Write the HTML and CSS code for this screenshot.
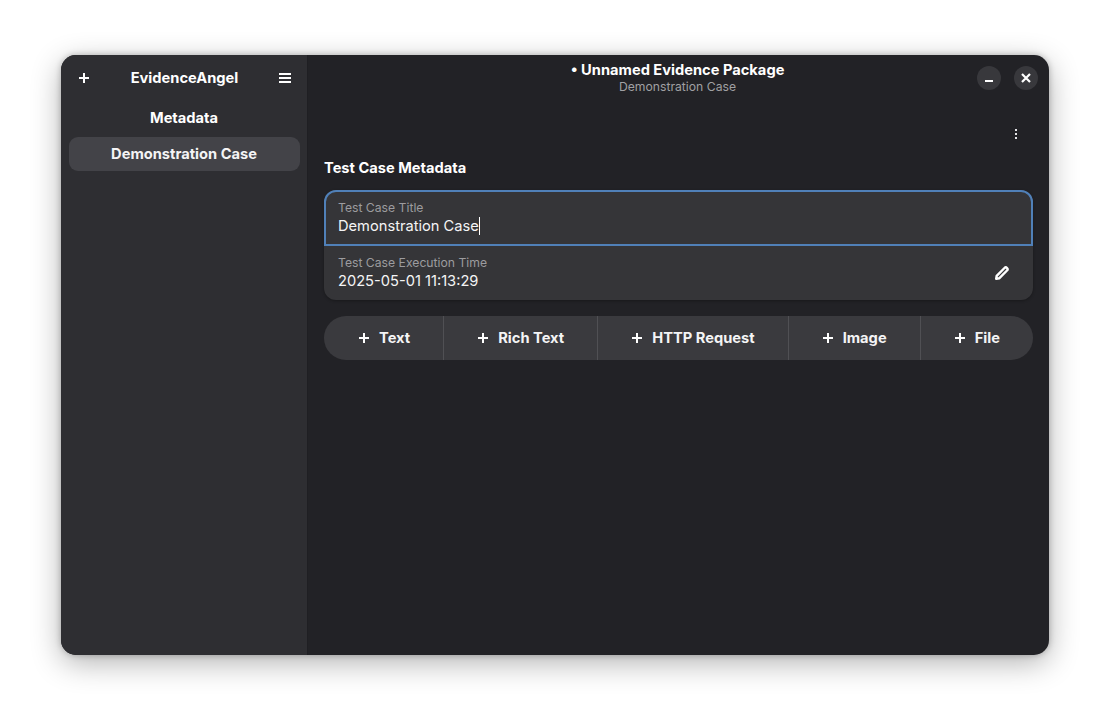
FILE: index.html
```html
<!DOCTYPE html>
<html lang="en">
<head>
    <meta charset="UTF-8">
    <meta name="viewport" content="width=device-width, initial-scale=1.0">
    <title>EvidenceAngel</title>
    <link rel="stylesheet" href="styles.css">
</head>
<body>
<div class="window">
    <div class="sidebar">
        <div class="side-header">
            <svg class="icon" width="12" height="12" viewBox="0 0 12 12"><path d="M6 1v10M1 6h10" stroke="#fff" stroke-width="2"/></svg>
            <span class="app-title">EvidenceAngel</span>
            <svg class="icon" width="12" height="12" viewBox="0 0 12 12"><path d="M0 2h12M0 6h12M0 10h12" stroke="#fff" stroke-width="2"/></svg>
        </div>
        <div class="side-section">Metadata</div>
        <div class="side-item">Demonstration Case</div>
    </div>
    <div class="main">
        <div class="topbar">
            <div class="titles">
                <div class="title">• Unnamed Evidence Package</div>
                <div class="subtitle">Demonstration Case</div>
            </div>
            <div class="win-buttons">
                <div class="win-button">
                    <svg width="10" height="10" viewBox="0 0 10 10"><path d="M1 8h8" stroke="#fff" stroke-width="2"/></svg>
                </div>
                <div class="win-button">
                    <svg width="10" height="10" viewBox="0 0 10 10"><path d="M1 1l8 8M9 1l-8 8" stroke="#fff" stroke-width="2.2"/></svg>
                </div>
            </div>
        </div>
        <div class="content">
            <div class="menu-row">
                <svg width="4" height="12" viewBox="0 0 4 12"><path d="M1 1h2v2H1zM1 5h2v2H1zM1 9h2v2H1z" fill="#e4e4e6"/></svg>
            </div>
            <h2 class="group-title">Test Case Metadata</h2>
            <div class="card">
                <div class="row row-focus">
                    <div class="row-label">Test Case Title</div>
                    <div class="row-value">Demonstration Case<span class="caret"></span></div>
                </div>
                <div class="row row-split">
                    <div>
                        <div class="row-label">Test Case Execution Time</div>
                        <div class="row-value">2025-05-01 11:13:29</div>
                    </div>
                    <svg class="pencil" width="16" height="16" viewBox="0 0 16 16"><path d="M2.2 13.8l.5-3 7.8-7.8a1.7 1.7 0 0 1 2.5 2.5l-7.8 7.8z" fill="none" stroke="#fff" stroke-width="2.4" stroke-linejoin="round"/></svg>
                </div>
            </div>
            <div class="linked">
                <div class="add-btn"><svg width="12" height="12" viewBox="0 0 12 12"><path d="M6 1v10M1 6h10" stroke="#fff" stroke-width="2"/></svg>Text</div>
                <div class="add-btn"><svg width="12" height="12" viewBox="0 0 12 12"><path d="M6 1v10M1 6h10" stroke="#fff" stroke-width="2"/></svg>Rich Text</div>
                <div class="add-btn"><svg width="12" height="12" viewBox="0 0 12 12"><path d="M6 1v10M1 6h10" stroke="#fff" stroke-width="2"/></svg>HTTP Request</div>
                <div class="add-btn"><svg width="12" height="12" viewBox="0 0 12 12"><path d="M6 1v10M1 6h10" stroke="#fff" stroke-width="2"/></svg>Image</div>
                <div class="add-btn"><svg width="12" height="12" viewBox="0 0 12 12"><path d="M6 1v10M1 6h10" stroke="#fff" stroke-width="2"/></svg>File</div>
            </div>
        </div>
    </div>
</div>
</body>
</html>
```

FILE: styles.css
```css
html, body {
    margin: 0;
    height: 100%;
}
body {
    background: #fff;
    font-family: "Inter", "Liberation Sans", sans-serif;
    font-size: 14.67px;
    color: #fff;
    padding: 55px 61px 67px 61px;
    box-sizing: border-box;
}

.window {
    display: flex;
    height: 600px;
    width: 988px;
    border-radius: 15px;
    overflow: hidden;
    box-shadow: 0 8px 30px rgba(0, 0, 0, 0.3), 0 0 6px rgba(0, 0, 0, 0.25);
    background: #222226;
}

/* sidebar */
.sidebar {
    width: 247px;
    flex-shrink: 0;
    background: #2e2e32;
    box-sizing: border-box;
    padding: 0 7px 0 8px;
    border-right: 1px solid #1f1f23;
}
.side-header {
    height: 45px;
    display: flex;
    align-items: center;
    justify-content: space-between;
    padding: 0 9px;
}
.app-title {
    font-weight: 700;
}
.side-section {
    height: 37px;
    line-height: 36px;
    padding-right: 1px;
    text-align: center;
    font-weight: 700;
}
.side-item {
    height: 34px;
    line-height: 34px;
    padding-right: 1px;
    text-align: center;
    font-weight: 700;
    background: #434348;
    border-radius: 9px;
    color: #f4f4f5;
}

/* main area */
.main {
    flex: 1;
    display: flex;
    flex-direction: column;
}
.topbar {
    position: relative;
    height: 47px;
}
.titles {
    text-align: center;
    padding: 6px 2px 0 0;
}
.title {
    font-weight: 700;
    line-height: 18px;
}
.subtitle {
    font-size: 12.2px;
    line-height: 15px;
    color: #a0a0a3;
}
.win-buttons {
    position: absolute;
    top: 11px;
    right: 11px;
    display: flex;
    gap: 13px;
}
.win-button {
    width: 24px;
    height: 24px;
    border-radius: 50%;
    background: #38383c;
    display: flex;
    align-items: center;
    justify-content: center;
}

.content {
    padding: 0 16px;
}
.menu-row {
    height: 64px;
    display: flex;
    justify-content: flex-end;
    align-items: flex-start;
    padding: 26px 15px 0 0;
    box-sizing: border-box;
}
.group-title {
    margin: -8px 0 12px 0;
    font-size: 14.67px;
    line-height: 20px;
    font-weight: 700;
}

.card {
    background: #353538;
    border-radius: 12px;
    box-shadow: 0 1px 3px rgba(0, 0, 0, 0.3);
}
.row {
    height: 54px;
    box-sizing: border-box;
    padding: 9px 14px 0 14px;
}
.row-focus {
    height: 56px;
    padding: 8px 12px 0 12px;
    border: 2px solid #5080b8;
    border-radius: 12px 12px 0 0;
}
.row-split {
    display: flex;
    justify-content: space-between;
    align-items: flex-start;
}
.row-label {
    font-size: 12.2px;
    line-height: 16px;
    color: #9c9c9f;
}
.row-value {
    font-size: 14.67px;
    line-height: 20px;
    color: #f4f4f5;
}
.caret {
    display: inline-block;
    width: 1px;
    height: 18px;
    background: #fff;
    vertical-align: -4px;
}
.pencil {
    margin: 10px 9px 0 0;
}

.linked {
    display: flex;
    margin-top: 16px;
    height: 44px;
    border-radius: 22px;
    overflow: hidden;
}
.add-btn {
    flex: 1 1 auto;
    display: flex;
    align-items: center;
    justify-content: center;
    gap: 9px;
    background: #3a3a3e;
    font-weight: 700;
    color: #f4f4f5;
    border-left: 1px solid #505054;
}
.add-btn:first-child {
    border-left: 0;
    padding-left: 1px;
}
```
